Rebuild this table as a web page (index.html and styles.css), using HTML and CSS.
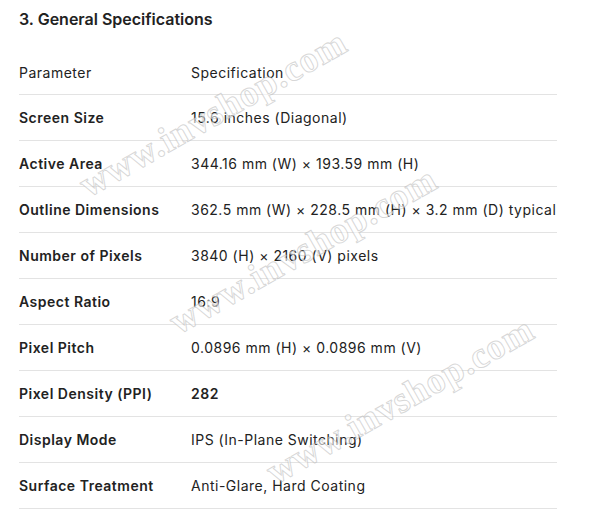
FILE: index.html
```html
<!DOCTYPE html>
<html lang="en">
<head>
<meta charset="utf-8">
<title>General Specifications</title>
<link rel="stylesheet" href="styles.css">
</head>
<body>
<main class="doc">
  <h3 class="title">3. General Specifications</h3>
  <table class="spec">
    <thead>
      <tr><th>Parameter</th><th>Specification</th></tr>
    </thead>
    <tbody>
      <tr><td class="key">Screen Size</td><td>15.6 inches (Diagonal)</td></tr>
      <tr><td class="key">Active Area</td><td>344.16 mm (W) × 193.59 mm (H)</td></tr>
      <tr><td class="key">Outline Dimensions</td><td>362.5 mm (W) × 228.5 mm (H) × 3.2 mm (D) typical</td></tr>
      <tr><td class="key">Number of Pixels</td><td>3840 (H) × 2160 (V) pixels</td></tr>
      <tr><td class="key">Aspect Ratio</td><td>16:9</td></tr>
      <tr><td class="key">Pixel Pitch</td><td>0.0896 mm (H) × 0.0896 mm (V)</td></tr>
      <tr><td class="key">Pixel Density (PPI)</td><td class="strong">282</td></tr>
      <tr><td class="key">Display Mode</td><td>IPS (In-Plane Switching)</td></tr>
      <tr><td class="key">Surface Treatment</td><td>Anti-Glare, Hard Coating</td></tr>
    </tbody>
  </table>
</main>
<div class="wm wm1">www.invshop.com</div>
<div class="wm wm2">www.invshop.com</div>
<div class="wm wm3">www.invshop.com</div>
</body>
</html>
```
FILE: styles.css
```css
html, body {
  margin: 0;
  padding: 0;
  background: #ffffff;
}
body {
  font-family: Inter, "Noto Sans", "Liberation Sans", sans-serif;
  color: #222222;
  overflow: hidden;
}
.doc {
  width: 538px;
  margin-left: 19px;
  padding-top: 7px;
}
.title {
  margin: 0 0 18px;
  font-size: 16px;
  line-height: 24px;
  font-weight: 600;
}
.spec {
  width: 538px;
  border-collapse: collapse;
  font-size: 14px;
  line-height: 20px;
  letter-spacing: 0.5px;
}
.spec th, .spec td {
  padding: 0;
  text-align: left;
  vertical-align: middle;
  border-bottom: 1px solid #e3e3e3;
  white-space: nowrap;
}
.spec td {
  padding-top: 1px;
  height: 44px;
}
.spec th {
  font-weight: 400;
  padding-top: 2px;
  height: 43px;
}
.spec th:first-child, .spec td:first-child {
  width: 172px;
}
.spec .key, .spec .strong {
  font-weight: 600;
}
.wm {
  position: absolute;
  left: 0;
  top: 0;
  font-family: "Liberation Serif", "DejaVu Serif", serif;
  font-weight: 700;
  font-size: 37px;
  letter-spacing: 1px;
  white-space: nowrap;
  color: rgba(255, 255, 255, 0.6);
  -webkit-text-stroke: 1px rgba(175, 175, 175, 0.5);
  transform: translate(-50%, -50%) rotate(-29.5deg);
  pointer-events: none;
}
.wm1 { left: 213px; top: 113px; }
.wm2 { left: 303px; top: 250px; }
.wm3 { left: 400px; top: 400px; }
```
